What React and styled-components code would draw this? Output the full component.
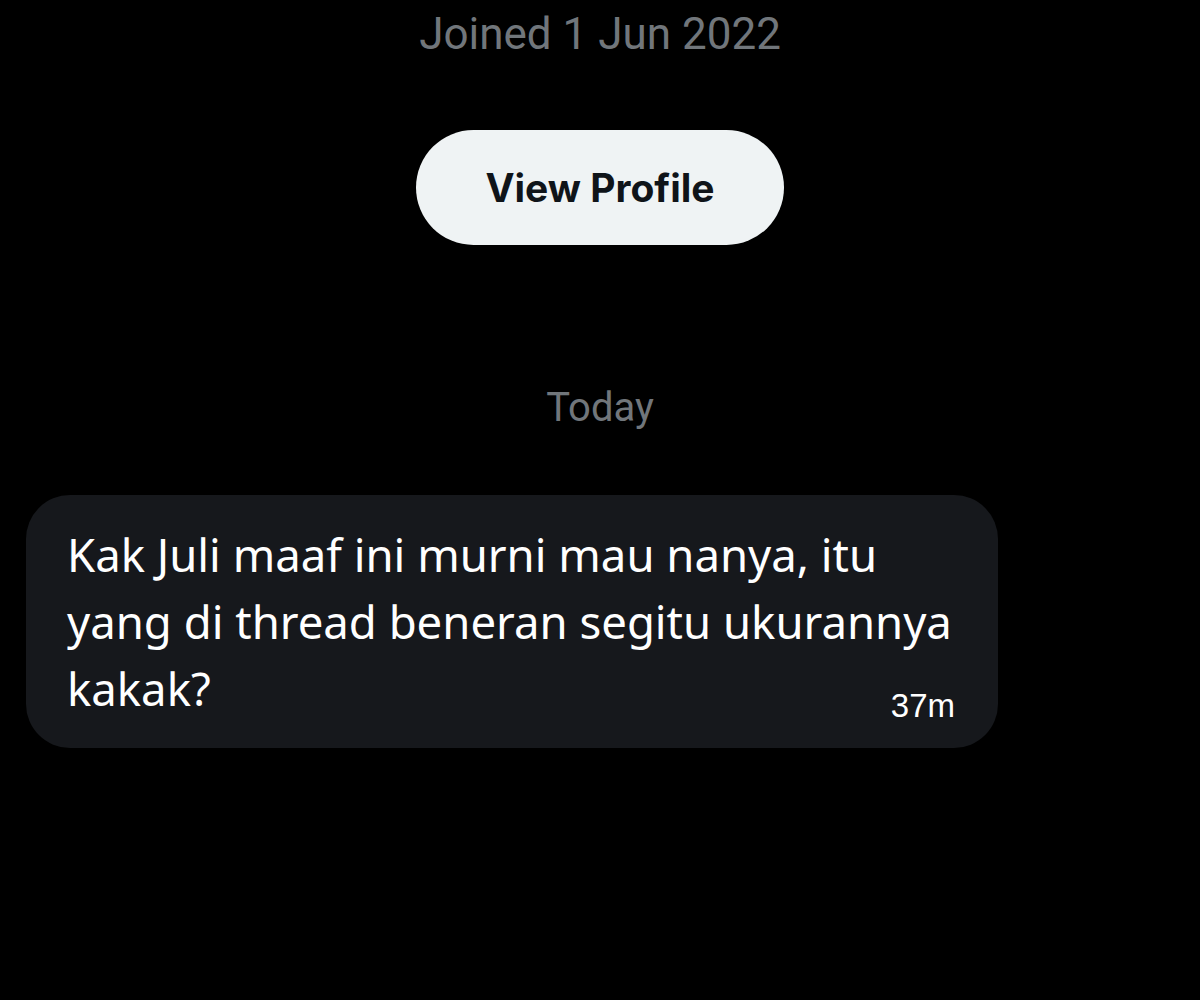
import React from "react";
import styled, { createGlobalStyle } from "styled-components";

const Global = createGlobalStyle`
  html, body { margin: 0; padding: 0; background: #000; }
  body { width: 1200px; height: 1000px; overflow: hidden; }
`;

const Page = styled.div`
  width: 1200px;
  height: 1000px;
  background: #000;
  display: flex;
  flex-direction: column;
  align-items: center;
  box-sizing: border-box;
`;

const Joined = styled.div`
  font-family: Roboto, "Liberation Sans", sans-serif;
  font-size: 44px;
  line-height: 54px;
  color: #71767b;
  margin-top: 7px;
`;

const ViewButton = styled.button`
  margin-top: 69px;
  width: 368px;
  height: 115px;
  border: none;
  border-radius: 58px;
  background: #eff3f4;
  color: #0f1419;
  font-family: Inter, "Liberation Sans", sans-serif;
  font-weight: 700;
  font-size: 39px;
  display: flex;
  align-items: center;
  justify-content: center;
  padding: 0;
`;

const DayLabel = styled.div`
  margin-top: 140px;
  font-family: Roboto, "Liberation Sans", sans-serif;
  font-size: 40px;
  line-height: 46px;
  color: #71767b;
`;

const Row = styled.div`
  align-self: stretch;
  display: flex;
  justify-content: flex-start;
  padding-left: 26px;
  margin-top: 64px;
`;

const Bubble = styled.div`
  width: 972px;
  box-sizing: border-box;
  background: #16181c;
  border-radius: 44px;
  padding: 26px 40px 22px 41px;
`;

const MessageText = styled.div`
  font-family: "Noto Sans", sans-serif;
  font-size: 45.5px;
  line-height: 67px;
  color: #ffffff;
  width: 888px;
`;

const Time = styled.span`
  float: right;
  margin-top: 31px;
  font-family: "Liberation Sans", Arial, sans-serif;
  font-size: 33px;
  line-height: 40px;
  color: #ffffff;
`;

export default function App() {
  return (
    <>
      <Global />
      <Page>
        <Joined>Joined 1 Jun 2022</Joined>
        <ViewButton>View Profile</ViewButton>
        <DayLabel>Today</DayLabel>
        <Row>
          <Bubble>
            <MessageText>
              Kak Juli maaf ini murni mau nanya, itu yang di thread beneran segitu ukurannya kakak?
              <Time>37m</Time>
            </MessageText>
          </Bubble>
        </Row>
      </Page>
    </>
  );
}
